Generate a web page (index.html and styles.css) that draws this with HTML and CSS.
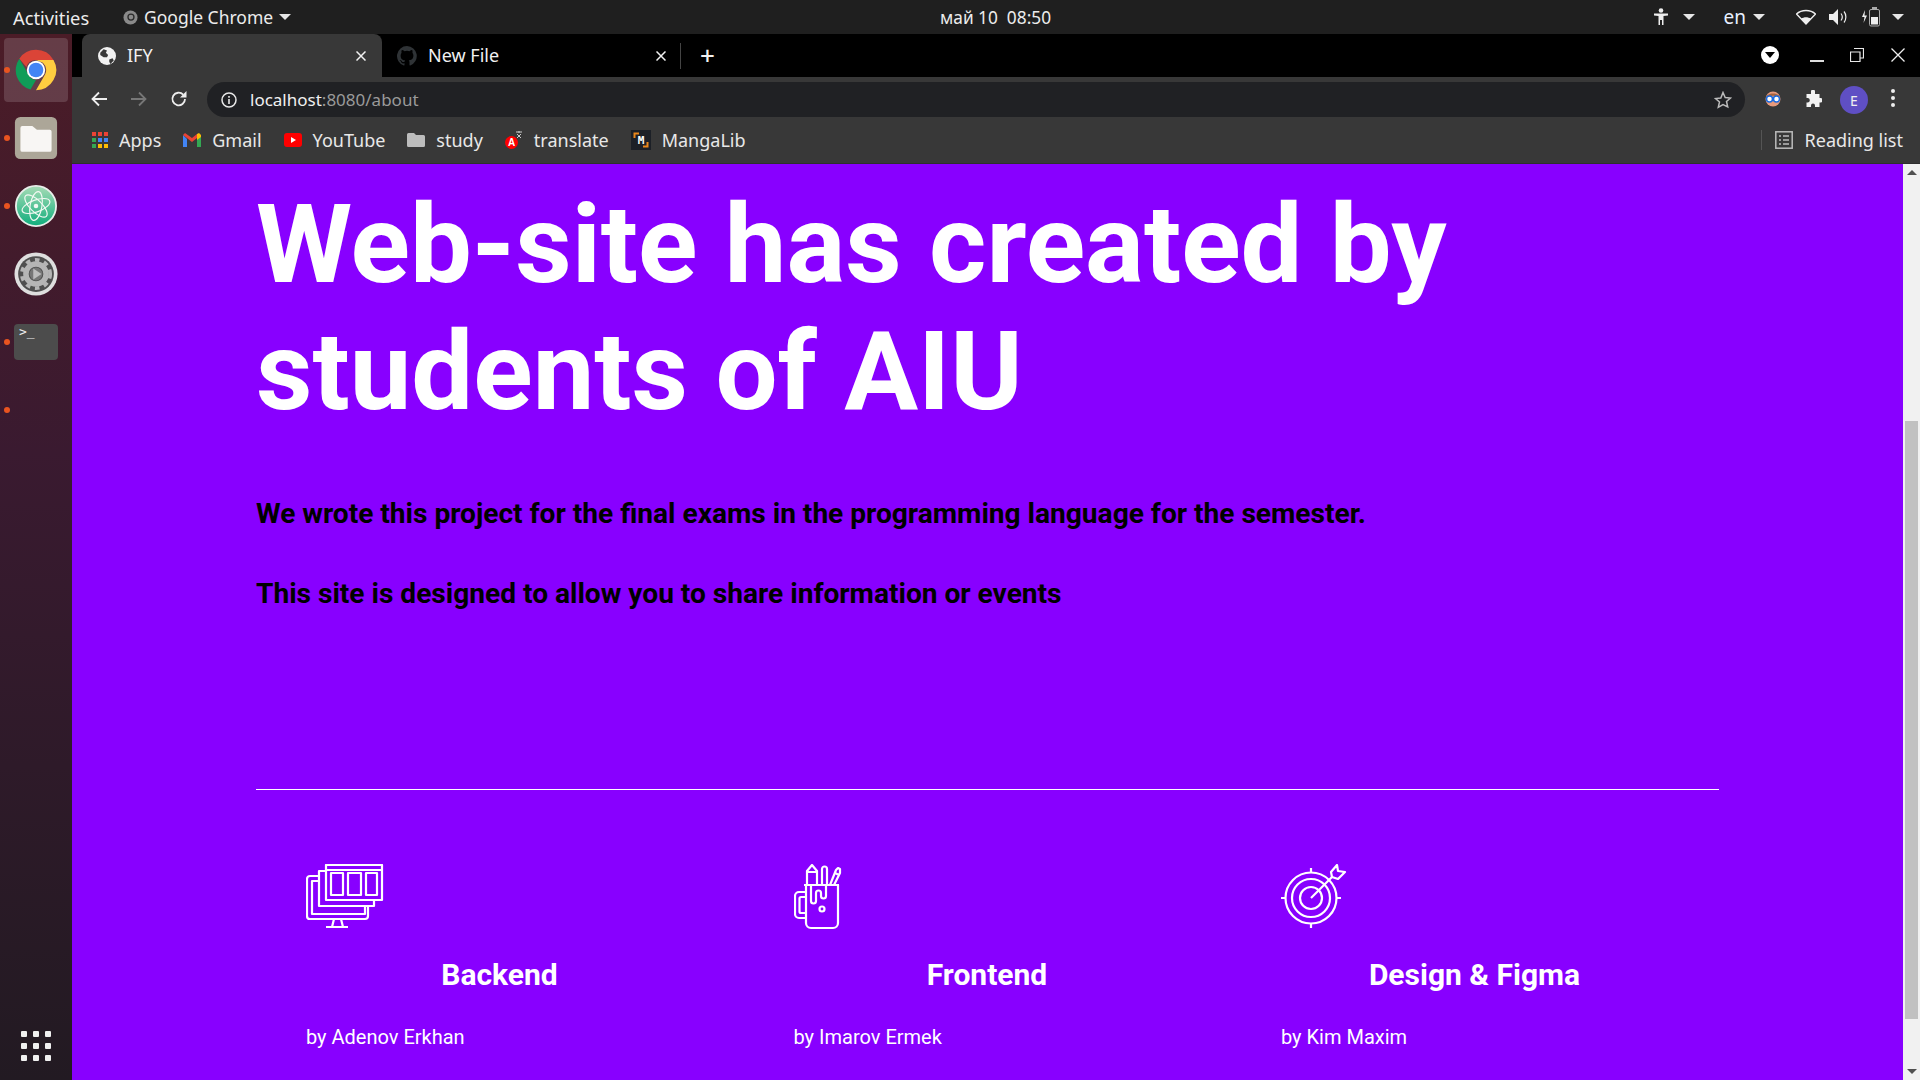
FILE: index.html
```html
<!DOCTYPE html>
<html>
<head lang="en">
    <meta charset="UTF-8">
    <title>IFY</title>
    <link rel="stylesheet" href="styles.css">
</head>
<body>
<div class="topbar">
    <div class="top-left">
        <span class="activities">Activities</span>
        <span class="app-menu">
            <svg class="app-icon" viewBox="0 0 16 16"><circle cx="8" cy="8" r="7.5" fill="#8a8a8a"/><circle cx="8.5" cy="7.5" r="3.2" fill="none" stroke="#2a2a2a" stroke-width="1.4"/></svg>
            Google Chrome
            <i class="caret"></i>
        </span>
    </div>
    <div class="clock">май 10&nbsp; 08:50</div>
    <div class="top-right">
        <svg class="tray-person" viewBox="0 0 16 18"><circle cx="8" cy="2.5" r="2.3" fill="#eee"/><path d="M1 5.5h14v2l-4.5.5V17H9V12H7v5H5.500V8L1 7.500z" fill="#eee"/></svg>
        <i class="caret"></i>
        <span class="lang">en</span>
        <i class="caret caret-lang"></i>
        <svg class="tray-wifi" viewBox="0 0 20 16"><path d="M10 15L.5 5C5.500.3 14.500.3 19.500 5z" fill="none" stroke="#eee" stroke-width="1.300"/><path d="M10 15L5 9.800c3-2 7-2 10 0z" fill="#eee"/></svg>
        <svg class="tray-sound" viewBox="0 0 20 16"><path d="M0 5h4l5-5v16l-5-5H0z" fill="#eee"/><path d="M12 4.500c1.500 2 1.500 5 0 7M15 2.500c2.500 3 2.500 8 0 11" fill="none" stroke="#eee" stroke-width="1.200"/></svg>
        <svg class="tray-battery" viewBox="0 0 20 20"><path d="M4 3L1 10h2.500L2.500 16 6 8.500H3.500z" fill="#eee"/><rect x="8.500" y="2.500" width="10" height="16.500" rx="1.500" fill="none" stroke="#aaa"/><rect x="11" y="0" width="5" height="2" fill="#aaa"/><rect x="10" y="10" width="7" height="7.500" fill="#eee"/></svg>
        <i class="caret"></i>
    </div>
</div>

<div class="desktop">
    <div class="dock">
        <div class="dock-item active">
            <i class="dot"></i>
            <svg class="dock-icon" viewBox="0 0 48 48">
                <path d="M24 2a22 22 0 0 1 19.100 11H24a11 11 0 0 0-10.500 7.600L5.800 11.600A22 22 0 0 1 24 2z" fill="#db4437"/>
                <path d="M5.800 11.600l9.800 17A11 11 0 0 0 24 35l-6 10.300A22 22 0 0 1 5.800 11.600z" fill="#0f9d58"/>
                <path d="M43.100 13A22 22 0 0 1 24 46l10-17.500A11 11 0 0 0 31.500 16L24 13z" fill="#ffcd40"/>
                <circle cx="24" cy="24" r="10" fill="#fff"/>
                <circle cx="24" cy="24" r="8" fill="#4285f4"/>
            </svg>
        </div>
        <div class="dock-item">
            <i class="dot"></i>
            <svg class="dock-icon" viewBox="0 0 48 48">
                <rect x="1" y="1" width="46" height="46" rx="6" fill="#aca698"/>
                <path d="M7 13a2 2 0 0 1 2-2h11l5 4h14a2 2 0 0 1 2 2v20a2 2 0 0 1-2 2H9a2 2 0 0 1-2-2z" fill="#f8f6f4"/>
            </svg>
        </div>
        <div class="dock-item">
            <i class="dot"></i>
            <svg class="dock-icon dock-atom" viewBox="0 0 46 46">
                <defs><linearGradient id="atomBg" x1="0" y1="0" x2="0" y2="1"><stop offset="0" stop-color="#a6dcb6"/><stop offset="1" stop-color="#10ad7c"/></linearGradient></defs>
                <circle cx="23" cy="23" r="22" fill="url(#atomBg)" stroke="#e9eeea" stroke-width="2"/>
                <g fill="none" stroke="#f2f8f2" stroke-width="1.300">
                    <ellipse cx="23" cy="23" rx="16" ry="6.500" transform="rotate(-20 23 23)"/>
                    <ellipse cx="23" cy="23" rx="16" ry="6.500" transform="rotate(45 23 23)"/>
                    <ellipse cx="23" cy="23" rx="16" ry="6.500" transform="rotate(100 23 23)"/>
                </g>
                <circle cx="23" cy="23" r="2.500" fill="#f2f8f2"/>
            </svg>
        </div>
        <div class="dock-item">
            <svg class="dock-icon" viewBox="0 0 48 48">
                <circle cx="24" cy="24" r="23.500" fill="#dedede"/>
                <circle cx="24" cy="24" r="19.500" fill="#4f4f4f"/>
                <circle cx="24" cy="24" r="11" fill="none" stroke="#b5b5b5" stroke-width="6"/>
                <circle cx="24" cy="24" r="15.500" fill="none" stroke="#b5b5b5" stroke-width="4" stroke-dasharray="5 5.200"/>
                <circle cx="24" cy="24" r="7" fill="#777"/>
                <path d="M21 18l9 6-9 6z" fill="#bdbdbd"/>
            </svg>
        </div>
        <div class="dock-item">
            <i class="dot"></i>
            <div class="terminal-icon">&gt;_</div>
        </div>
        <div class="dock-item dock-empty">
            <i class="dot"></i>
        </div>
        <div class="dock-grid">
            <i></i><i></i><i></i><i></i><i></i><i></i><i></i><i></i><i></i>
        </div>
    </div>

    <div class="browser">
        <div class="tabstrip">
            <div class="tab tab-active">
                <svg class="tab-icon" viewBox="0 0 16 16"><circle cx="8" cy="8" r="8" fill="#f1f1f1"/><path d="M2 5l3-3 3 1-1 2 2 2-1 2H5L2 7zM10 11l3-1 1 2-3 3-1-2z" fill="#383838"/></svg>
                <span class="tab-title">IFY</span>
                <svg class="tab-close" viewBox="0 0 10 10"><path d="M.5.5l9 9M9.500.5l-9 9" stroke="#f1f1f1" stroke-width="1.500"/></svg>
            </div>
            <div class="tab">
                <svg class="tab-icon tab-github" viewBox="0 0 16 16"><path d="M8 0a8 8 0 0 0-2.500 15.600c.4.100.5-.2.500-.4v-1.400c-2.200.5-2.700-1-2.700-1-.4-.9-.9-1.200-.9-1.200-.7-.5.100-.5.100-.5.800.1 1.200.8 1.200.8.700 1.200 1.900.9 2.300.7.100-.5.300-.9.500-1.100-1.800-.2-3.600-.9-3.600-4 0-.9.300-1.600.8-2.100-.1-.2-.4-1 .1-2.100 0 0 .7-.2 2.200.8a7.500 7.500 0 0 1 4 0c1.500-1 2.200-.8 2.200-.8.400 1.100.2 1.900.1 2.100.5.600.8 1.300.8 2.100 0 3.100-1.900 3.700-3.700 3.900.3.300.6.800.6 1.500v2.200c0 .2.100.5.600.4A8 8 0 0 0 8 0z" fill="#2f3336"/></svg>
                <span class="tab-title">New File</span>
                <svg class="tab-close" viewBox="0 0 10 10"><path d="M.5.5l9 9M9.500.5l-9 9" stroke="#f1f1f1" stroke-width="1.500"/></svg>
            </div>
            <i class="tab-sep"></i>
            <span class="tab-new">+</span>
            <div class="window-btns">
                <span class="tab-search"><i></i></span>
                <i class="win-min"></i>
                <svg class="win-max" viewBox="0 0 14 14"><path d="M4 .5h9.500V10H10M.5 4H10v9.500H.5z" fill="none" stroke="#e8e8e8" stroke-width="1.200"/></svg>
                <span class="win-close">
                    <svg viewBox="0 0 14 14"><path d="M.5.5l13 13M13.500.5l-13 13" stroke="#eee" stroke-width="1.300"/></svg>
                </span>
            </div>
        </div>

        <div class="toolbar">
            <svg class="nav" viewBox="0 0 18 18"><path d="M17 9H3M9 2.500L2.500 9 9 15.500" fill="none" stroke="#eee" stroke-width="1.800"/></svg>
            <svg class="nav" viewBox="0 0 18 18"><path d="M1 9h14M9 2.500L15.500 9 9 15.500" fill="none" stroke="#777" stroke-width="1.800"/></svg>
            <svg class="nav" viewBox="0 0 18 18"><path d="M15 9a6.300 6.300 0 1 1-1.800-4.400" fill="none" stroke="#eee" stroke-width="1.800"/><path d="M16.500 1v6.500H10z" fill="#eee"/></svg>
            <div class="omnibox">
                <svg class="info" viewBox="0 0 16 16"><circle cx="8" cy="8" r="7" fill="none" stroke="#e8e8e8" stroke-width="1.500"/><path d="M8 7v5M8 4v1.800" stroke="#e8e8e8" stroke-width="1.600"/></svg>
                <span class="url">localhost<span class="url-dim">:8080/about</span></span>
                <svg class="star" viewBox="0 0 18 18"><path d="M9 1.500l2.200 5 5.300.5-4 3.500 1.200 5.300L9 13.500l-4.700 2.800 1.200-5.300-4-3.500 5.300-.5z" fill="none" stroke="#bbb" stroke-width="1.500"/></svg>
            </div>
            <svg class="ext-face" viewBox="0 0 18 18"><circle cx="9" cy="9" r="7.500" fill="#e89a7c"/><path d="M2 8C2 2 16 2 16 8c-3-3-11-3-14 0z" fill="#a5623c"/><circle cx="5.500" cy="9" r="3" fill="#fff" stroke="#1a6be0" stroke-width="1.500"/><circle cx="12.500" cy="9" r="3" fill="#fff" stroke="#1a6be0" stroke-width="1.500"/></svg>
            <svg class="ext-puzzle" viewBox="0 0 18 18"><path d="M7 1.500a2 2 0 0 1 4 0V4h4.500v4H17a2.300 2.300 0 0 1 0 4.500h-1.500V17H11v-1.500a2 2 0 0 0-4 0V17H2.500v-4.500H4a2.300 2.300 0 0 0 0-4.500H2.500V4H7z" fill="#f2f2f2"/></svg>
            <span class="avatar">E</span>
            <span class="kebab"><i></i><i></i><i></i></span>
        </div>

        <div class="bookmarks">
            <span class="bm">
                <svg class="bm-icon" viewBox="0 0 16 16"><g fill="#ea4335"><rect width="4" height="4"/><rect x="6" width="4" height="4"/><rect x="12" width="4" height="4"/></g><g fill="#34a853"><rect y="6" width="4" height="4"/></g><g fill="#4285f4"><rect x="6" y="6" width="4" height="4"/><rect x="12" y="6" width="4" height="4"/></g><g fill="#34a853"><rect y="12" width="4" height="4"/></g><g fill="#fbbc05"><rect x="6" y="12" width="4" height="4"/><rect x="12" y="12" width="4" height="4"/></g></svg>
                Apps
            </span>
            <span class="bm">
                <svg class="bm-icon bm-gmail" viewBox="0 0 18 14"><path d="M0 2v12h4V6z" fill="#4285f4"/><path d="M14 6v8h4V2z" fill="#34a853"/><path d="M0 2l9 7 5-4v-4l-5 4-7-5z" fill="#ea4335"/><path d="M14 1l2-1 2 2v2l-4 3z" fill="#fbbc05"/></svg>
                Gmail
            </span>
            <span class="bm">
                <svg class="bm-icon bm-yt" viewBox="0 0 18 14"><rect width="18" height="14" rx="3" fill="#f00"/><path d="M7 4l5 3-5 3z" fill="#fff"/></svg>
                YouTube
            </span>
            <span class="bm">
                <svg class="bm-icon bm-folder" viewBox="0 0 18 14"><path d="M0 1.500A1.500 1.500 0 0 1 1.500 0H7l2 2h7.500A1.500 1.500 0 0 1 18 3.500v9a1.500 1.500 0 0 1-1.500 1.500h-15A1.500 1.500 0 0 1 0 12.500z" fill="#bdbdbd"/></svg>
                study
            </span>
            <span class="bm">
                <svg class="bm-icon bm-translate" viewBox="0 0 18 18"><circle cx="6.500" cy="11.500" r="6.500" fill="#f00"/><text x="6.500" y="15" class="bm-letter">A</text><path d="M11 1h6M14 0v2M12 3l4 4M16 3l-4 4" stroke="#ccc" stroke-width="1"/></svg>
                translate
            </span>
            <span class="bm">
                <svg class="manga-icon" viewBox="0 0 20 20"><rect width="20" height="20" fill="#1c2027"/><path d="M3.500 8V3.500H8M16.500 12v4.500H12" fill="none" stroke="#e8861c" stroke-width="2"/><text x="10" y="14" class="manga-letter">M</text></svg>
                MangaLib
            </span>
            <div class="reading">
                <svg class="bm-icon reading-icon" viewBox="0 0 18 18"><rect x=".8" y=".8" width="16.400" height="16.400" fill="none" stroke="#bbb" stroke-width="1.500"/><path d="M4 5h2M8 5h6M4 9h2M8 9h6M4 13h2M8 13h6" stroke="#bbb" stroke-width="1.500"/></svg>
                Reading list
            </div>
        </div>

        <div class="viewport">
            <div class="page">
                <h1 class="headline">Web-site has created by students of AIU</h1>
                <p class="lead lead-first">We wrote this project for the final exams in the programming language for the semester.</p>
                <p class="lead">This site is designed to allow you to share information or events</p>
                <hr class="rule">
                <div class="team">
                    <div class="member">
                        <svg class="member-icon" viewBox="0 0 78 66" width="78" height="66"><g fill="none" stroke="#fff" stroke-width="2.200" stroke-linejoin="round">
                            <path d="M20 1h56v35H20zM20 6h56M25 9h12v22H25zM42 9h13v22H42zM60 9h11v22H60z"/>
                            <path d="M20 7h-7v35h55v-6"/>
                            <path d="M13 12H4a3 3 0 0 0-3 3v37a3 3 0 0 0 3 3h55a3 3 0 0 0 3-3V42M13 17H6v33h53v-8"/>
                            <path d="M28 55l-2 8M35 55l2 8M20 63h22"/>
                        </g></svg>
                        <h3 class="member-role">Backend</h3>
                        <p class="member-name">by Adenov Erkhan</p>
                    </div>
                    <div class="member">
                        <svg class="member-icon" viewBox="0 0 50 66" width="50" height="66"><g fill="none" stroke="#fff" stroke-width="2.200" stroke-linejoin="round">
                            <path d="M13 21V7l5-6 5 6v14M13 8h10"/>
                            <path d="M28 21V5a2.500 2.500 0 0 1 5 0v16"/>
                            <path d="M36 21l6-15 2-2 2 1v4l-6 12M41 9l4 2"/>
                            <path d="M10 21h35M12 21v38a5 5 0 0 0 5 5h22a5 5 0 0 0 5-5V21"/>
                            <path d="M17 21v16a2.500 2.500 0 0 0 5 0v-8a2.500 2.500 0 0 1 5 0v3a2.500 2.500 0 0 0 5 0V21"/>
                            <circle cx="28" cy="45" r="2.500"/>
                            <path d="M12 28H5a4 4 0 0 0-4 4v18a4 4 0 0 0 4 4h7M12 33H7a1.500 1.500 0 0 0-1.500 1.500v13A1.500 1.500 0 0 0 7 49h5"/>
                        </g></svg>
                        <h3 class="member-role">Frontend</h3>
                        <p class="member-name">by Imarov Ermek</p>
                    </div>
                    <div class="member">
                        <svg class="member-icon" viewBox="0 0 66 66" width="66" height="66"><g fill="none" stroke="#fff" stroke-width="2.200" stroke-linejoin="round">
                            <circle cx="30" cy="34" r="25.500"/>
                            <circle cx="30" cy="34" r="19"/>
                            <circle cx="30" cy="34" r="11"/>
                            <path d="M30 4v5M30 59v5M0 34h5M55 34h5M30 34L51 13"/>
                            <path d="M51 13l-1-5 6-7 1 6 7 1-7 7z"/>
                        </g></svg>
                        <h3 class="member-role">Design &amp; Figma</h3>
                        <p class="member-name">by Kim Maxim</p>
                    </div>
                </div>
            </div>
            <div class="scrollbar">
                <i class="arrow-up"></i>
                <div class="scroll-track"><div class="scroll-thumb"></div></div>
                <i class="arrow-down"></i>
            </div>
        </div>
    </div>
</div>
</body>
</html>
```

FILE: styles.css
```css
* {
    margin: 0;
    padding: 0;
    box-sizing: border-box;
}

html, body {
    width: 1920px;
    height: 1080px;
    overflow: hidden;
}

body {
    font-family: "Noto Sans", "Open Sans", sans-serif;
    display: flex;
    flex-direction: column;
    background: #000;
}

i {
    display: block;
}

/* ubuntu top bar */
.topbar {
    height: 34px;
    flex: none;
    display: flex;
    align-items: center;
    background: #1f1f1f;
    color: #ececec;
    font-size: 17.500px;
}

.top-left {
    width: 940px;
    display: flex;
    align-items: center;
    padding-left: 13px;
}

.activities {
    width: 110px;
    font-size: 18.300px;
}

.app-menu {
    display: flex;
    align-items: center;
    gap: 6px;
}

.app-icon {
    width: 15px;
    height: 15px;
}

.caret {
    width: 0;
    height: 0;
    border-left: 6px solid transparent;
    border-right: 6px solid transparent;
    border-top: 6px solid #e6e6e6;
}

.clock {
    font-size: 17.300px;
}

.top-right {
    flex: 1;
    display: flex;
    align-items: center;
    justify-content: flex-end;
    padding-right: 16px;
}

.tray-person {
    width: 16px;
    height: 18px;
    margin-right: 14px;
}

.lang {
    margin-left: 29px;
    margin-right: 7px;
    color: #e8f0ff;
    font-size: 19px;
}

.tray-wifi {
    width: 20px;
    height: 16px;
    margin-left: 31px;
}

.tray-sound {
    width: 20px;
    height: 16px;
    margin-left: 13px;
}

.tray-battery {
    width: 20px;
    height: 20px;
    margin-left: 12px;
    margin-right: 11px;
}

.desktop {
    flex: 1;
    display: flex;
    min-height: 0;
}

/* dock */
.dock {
    width: 72px;
    flex: none;
    position: relative;
    display: flex;
    flex-direction: column;
    align-items: center;
    padding-top: 4px;
    background: linear-gradient(#4b1c27, #3a1a30 40%, #221a22);
}

.dock-item {
    width: 64px;
    height: 64px;
    margin-bottom: 4px;
    display: flex;
    align-items: center;
    justify-content: center;
    position: relative;
    border-radius: 4px;
}

.dock-item.active {
    background: rgba(255, 255, 255, .15);
}

.dot {
    position: absolute;
    left: 0;
    top: 29px;
    width: 6px;
    height: 6px;
    border-radius: 50%;
    background: #e95420;
}

.dock-icon {
    width: 44px;
    height: 44px;
    margin-left: 0;
}

.dock-atom {
    width: 42px;
    height: 42px;
}

.terminal-icon {
    width: 44px;
    height: 36px;
    border-radius: 4px;
    background: #4c4c4c;
    color: #eee;
    font-family: "DejaVu Sans Mono", monospace;
    font-size: 13px;
    line-height: 14px;
    padding: 1px 0 0 5px;
}

.dock-grid {
    position: absolute;
    left: 21px;
    bottom: 19px;
    display: grid;
    grid-template-columns: repeat(3, 6px);
    gap: 6px;
}

.dock-grid i {
    height: 6px;
    border-radius: 1px;
    background: #f0f0f0;
}

/* chrome */
.browser {
    flex: 1;
    min-width: 0;
    display: flex;
    flex-direction: column;
}

.tabstrip {
    height: 43px;
    flex: none;
    display: flex;
    align-items: center;
    background: #000;
    color: #f1f1f1;
    padding-left: 10px;
}

.tab {
    width: 300px;
    height: 43px;
    display: flex;
    align-items: center;
    padding: 0 16px 0 16px;
    font-size: 18px;
    flex: none;
}

.tab-active {
    background: #383838;
    border-radius: 8px 8px 0 0;
}

.tab-icon {
    width: 18px;
    height: 18px;
    flex: none;
}

.tab-github {
    width: 20px;
    height: 20px;
    margin-left: -1px;
}

.tab-title {
    flex: 1;
    margin-left: 11px;
    margin-top: -2px;
}

.tab-close {
    width: 10px;
    height: 10px;
    flex: none;
}

.tab-sep {
    width: 1px;
    height: 26px;
    background: #444;
    margin-left: -2px;
}

.tab-new {
    margin-left: 19px;
    margin-top: -2px;
    font-size: 26px;
    font-weight: 500;
    line-height: 26px;
}

.window-btns {
    margin-left: auto;
    display: flex;
    align-items: center;
    margin-top: -1px;
}

.tab-search {
    width: 18px;
    height: 18px;
    border-radius: 50%;
    background: #fff;
    display: flex;
    align-items: center;
    justify-content: center;
}

.tab-search i {
    border-left: 5px solid transparent;
    border-right: 5px solid transparent;
    border-top: 6px solid #000;
}

.win-min {
    width: 14px;
    height: 2px;
    background: #ddd;
    margin: 11px 0 0 31px;
}

.win-max {
    width: 14px;
    height: 14px;
    margin-left: 26px;
}

.win-close {
    width: 14px;
    height: 14px;
    margin: 0 15px 0 27px;
}

.win-close svg {
    display: block;
}

.toolbar {
    height: 40px;
    flex: none;
    display: flex;
    align-items: flex-end;
    background: #383838;
    position: relative;
    padding-left: 18px;
}

.nav {
    width: 18px;
    height: 18px;
    margin: 0 22px 9px 0;
    flex: none;
}

.omnibox {
    width: 1538px;
    height: 35px;
    margin-left: -3px;
    display: flex;
    align-items: center;
    border-radius: 18px;
    background: #202124;
    padding: 0 13px 0 14px;
    color: #f0f0f0;
    font-size: 17px;
    flex: none;
}

.info {
    width: 16px;
    height: 16px;
}

.url {
    margin-left: 13px;
    flex: 1;
}

.url-dim {
    color: #9a9a9a;
}

.star {
    width: 18px;
    height: 18px;
}

.ext-face {
    width: 18px;
    height: 18px;
    margin: 0 0 9px 19px;
    flex: none;
}

.ext-puzzle {
    width: 18px;
    height: 18px;
    margin: 0 0 9px 22px;
    flex: none;
}

.avatar {
    width: 28px;
    height: 28px;
    margin: 0 0 3px 18px;
    border-radius: 50%;
    background: #5f4fc4;
    color: #f0f0f0;
    font-size: 14px;
    display: flex;
    align-items: center;
    justify-content: center;
    flex: none;
}

.kebab {
    margin: 0 0 10px 23px;
    display: flex;
    flex-direction: column;
    gap: 3px;
}

.kebab i {
    width: 4px;
    height: 4px;
    border-radius: 50%;
    background: #eee;
}

.bookmarks {
    height: 47px;
    flex: none;
    display: flex;
    align-items: center;
    background: #383838;
    color: #e8e8e8;
    font-size: 18px;
    padding-left: 20px;
    border-bottom: 1px solid #2e2e2e;
}

.bm {
    display: flex;
    align-items: center;
    gap: 11px;
    margin-right: 22px;
}

.bm-icon {
    width: 16px;
    height: 16px;
    flex: none;
}

.bm-gmail, .bm-yt {
    width: 18px;
    height: 14px;
}

.bm-folder {
    width: 18px;
    height: 14px;
}

.bm-translate {
    width: 18px;
    height: 18px;
}

.bm-letter {
    font-family: "Liberation Sans", sans-serif;
    font-size: 10px;
    font-weight: bold;
    fill: #fff;
    text-anchor: middle;
}

.manga-icon {
    width: 20px;
    height: 20px;
    flex: none;
}

.manga-letter {
    font-family: "DejaVu Sans Mono", monospace;
    font-size: 11px;
    font-weight: bold;
    fill: #fff;
    text-anchor: middle;
}

.reading {
    margin-left: auto;
    display: flex;
    align-items: center;
    gap: 12px;
    height: 20px;
    padding: 0 17px 0 13px;
    border-left: 1px solid #555;
}

.reading-icon {
    width: 18px;
    height: 18px;
}

/* page */
.viewport {
    flex: 1;
    min-height: 0;
    display: flex;
}

.page {
    flex: 1;
    min-width: 0;
    overflow: hidden;
    background: #8800ff;
    padding: 17px 184px 0 184px;
    font-family: Roboto, sans-serif;
    color: #fff;
}

.headline {
    font-size: 110px;
    font-weight: 700;
    line-height: 127px;
    width: 1300px;
}

.lead {
    color: #000;
    font-size: 28.100px;
    font-weight: 700;
    line-height: 34px;
    margin-top: 46px;
}

.lead-first {
    margin-top: 62px;
}

.rule {
    border: 0;
    border-top: 1px solid #fff;
    margin-top: 178px;
}

.team {
    display: grid;
    grid-template-columns: repeat(3, 487.500px);
    margin-top: 74px;
}

.member {
    padding-left: 50px;
}

.member-icon {
    display: block;
}

.member-role {
    font-size: 30px;
    font-weight: 700;
    line-height: 36px;
    text-align: center;
    width: 387px;
    margin-top: 27px;
}

.member-name {
    font-size: 20px;
    line-height: 24px;
    margin-top: 32px;
}

.scrollbar {
    width: 17px;
    flex: none;
    display: flex;
    flex-direction: column;
    align-items: center;
    background: #f1f1f1;
    padding: 6px 0;
}

.arrow-up, .arrow-down {
    width: 0;
    height: 0;
    border-left: 5px solid transparent;
    border-right: 5px solid transparent;
    flex: none;
}

.arrow-up {
    border-bottom: 5px solid #505050;
}

.arrow-down {
    border-top: 5px solid #505050;
}

.scroll-track {
    flex: 1;
    width: 100%;
    display: flex;
    flex-direction: column;
    justify-content: flex-end;
    padding: 0 2px 50px 2px;
}

.scroll-thumb {
    height: 598px;
    background: #c1c1c1;
}
```
